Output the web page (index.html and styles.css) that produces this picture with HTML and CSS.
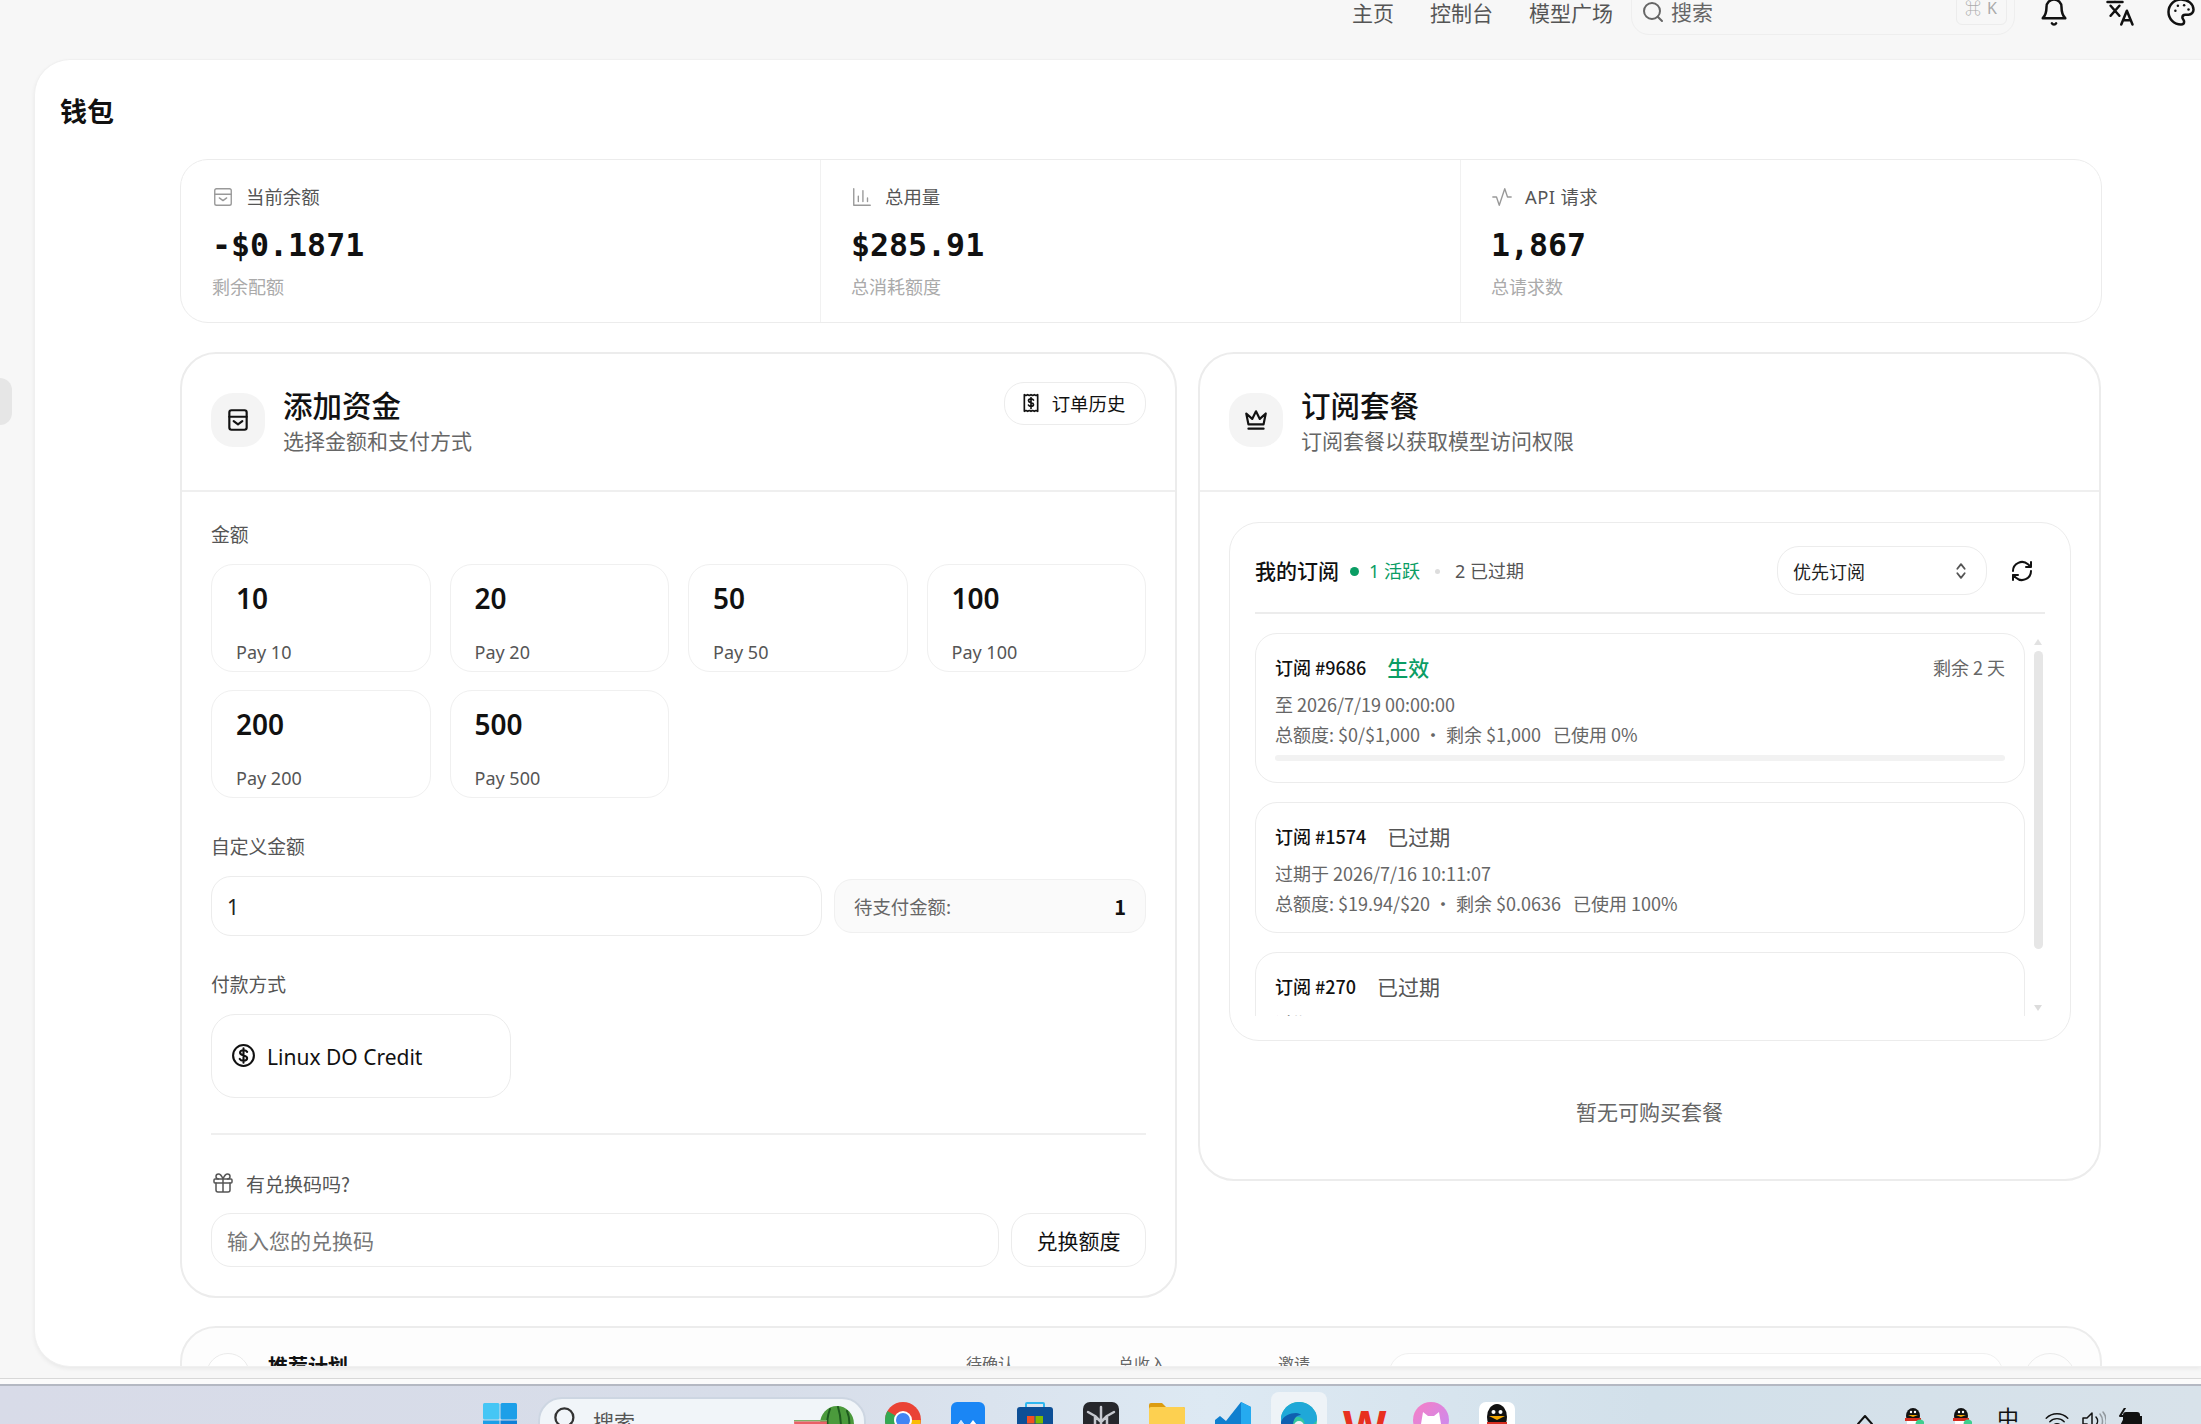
FILE: index.html
```html
<!doctype html>
<html lang="zh">
<head>
	<title>钱包</title>
	<meta charset="utf-8"/>
	<link rel="stylesheet" href="styles.css">
</head>
<body>

	<header class="topbar">
		<a class="navLink">主页</a>
		<a class="navLink">控制台</a>
		<a class="navLink">模型广场</a>
		<div class="searchBox">
			<svg class="searchIcon" viewBox="0 0 24 24"><circle cx="11" cy="11" r="8"/><path d="M21 21l-4.300-4.300"/></svg>
			<span class="searchText">搜索</span>
			<span class="kbd">⌘ K</span>
		</div>
		<svg class="topIcon bell" viewBox="0 0 24 24"><path d="M6 8a6 6 0 0 1 12 0c0 6 3 9 3 9H3s3-3 3-9"/><path d="M10.300 21a1.900 1.900 0 0 0 3.400 0"/></svg>
		<svg class="topIcon lang" viewBox="0 0 24 24"><path d="M2 4h12M8 1v.5M4.500 7l7 8M11.500 7l-7 8"/><path d="M13 22l4.500-11L22 22M14.500 18.500h6"/></svg>
		<svg class="topIcon palette" viewBox="0 0 24 24"><path d="M12 2a10 10 0 0 0 0 20c1.500 0 2.500-1 2.500-2.300 0-.7-.3-1.200-.7-1.700-.4-.5-.7-1-.7-1.600 0-1.300 1-2.200 2.300-2.200H18a4 4 0 0 0 4-4.200C22 5.500 17.500 2 12 2z"/><circle cx="7.500" cy="11" r="1" class="dot"/><circle cx="9.500" cy="7" r="1" class="dot"/><circle cx="14.500" cy="6.500" r="1" class="dot"/><circle cx="18" cy="10" r="1" class="dot"/></svg>
	</header>

	<div class="sideTab"></div>

	<main class="panel">
		<h1 class="pageTitle">钱包</h1>

		<div class="wrap">
			<section class="stats">
				<div class="stat">
					<div class="statLabel">
						<svg class="statIcon" viewBox="0 0 24 24"><rect x="3" y="3" width="18" height="18" rx="2"/><path d="M3 9h18M8 13l4 3 4-3"/></svg>
						当前余额
					</div>
					<div class="statValue">-$0.1871</div>
					<div class="statSub">剩余配额</div>
				</div>
				<div class="stat">
					<div class="statLabel">
						<svg class="statIcon" viewBox="0 0 24 24"><path d="M3 3v18h18M8 17v-6M13 17V5M18 17v-4"/></svg>
						总用量
					</div>
					<div class="statValue">$285.91</div>
					<div class="statSub">总消耗额度</div>
				</div>
				<div class="stat">
					<div class="statLabel">
						<svg class="statIcon" viewBox="0 0 24 24"><path d="M2 12h4l3 9 6-18 3 9h4"/></svg>
						<span class="apiLabel">API 请求</span>
					</div>
					<div class="statValue">1,867</div>
					<div class="statSub">总请求数</div>
				</div>
			</section>

			<div class="columns">
				<section class="card">
					<div class="cardHead">
						<div class="iconTile">
							<svg viewBox="0 0 24 24"><rect x="4" y="3" width="16" height="18" rx="2"/><path d="M4 9h16M8 13l4 3 4-3"/></svg>
						</div>
						<div class="headText">
							<h2 class="cardTitle">添加资金</h2>
							<p class="cardSub">选择金额和支付方式</p>
						</div>
						<button class="historyBtn">
							<svg viewBox="0 0 24 24"><path d="M4 2v20l2-1 2 1 2-1 2 1 2-1 2 1 2-1 2 1V2l-2 1-2-1-2 1-2-1-2 1-2-1-2 1z"/><path d="M15 8.500c-.5-1-1.500-1.500-3-1.500-1.800 0-3 .8-3 2.200 0 3 6 1.600 6 4.600 0 1.400-1.200 2.200-3 2.200-1.500 0-2.500-.5-3-1.500M12 5.500v13"/></svg>
							订单历史
						</button>
					</div>
					<div class="cardBody">
						<div class="fieldLabel">金额</div>
						<div class="amounts">
							<div class="amount"><div class="amountNum">10</div><div class="amountPay">Pay 10</div></div>
							<div class="amount"><div class="amountNum">20</div><div class="amountPay">Pay 20</div></div>
							<div class="amount"><div class="amountNum">50</div><div class="amountPay">Pay 50</div></div>
							<div class="amount"><div class="amountNum">100</div><div class="amountPay">Pay 100</div></div>
							<div class="amount"><div class="amountNum">200</div><div class="amountPay">Pay 200</div></div>
							<div class="amount"><div class="amountNum">500</div><div class="amountPay">Pay 500</div></div>
						</div>

						<div class="fieldLabel customLabel">自定义金额</div>
						<div class="customRow">
							<div class="customInput">1</div>
							<div class="dueBox"><span>待支付金额:</span><b>1</b></div>
						</div>

						<div class="fieldLabel payLabel">付款方式</div>
						<div class="payMethod">
							<svg viewBox="0 0 24 24"><circle cx="12" cy="12" r="10"/><path d="M15.500 8.500c-.6-1-1.800-1.500-3.500-1.500-1.900 0-3.300.9-3.300 2.400 0 3.200 6.800 1.800 6.800 5 0 1.600-1.500 2.600-3.500 2.600-1.700 0-3-.6-3.600-1.700M12 5v14"/></svg>
							Linux DO Credit
						</div>

						<div class="formRule"></div>

						<div class="redeemLabel">
							<svg viewBox="0 0 24 24"><rect x="3" y="8" width="18" height="4" rx="1"/><path d="M12 8v13M19 12v7a2 2 0 0 1-2 2H7a2 2 0 0 1-2-2v-7M7.500 8a2.500 2.500 0 0 1 0-5C10 3 12 8 12 8s2-5 4.500-5a2.500 2.500 0 0 1 0 5"/></svg>
							有兑换码吗?
						</div>
						<div class="redeemRow">
							<div class="redeemInput">输入您的兑换码</div>
							<button class="redeemBtn">兑换额度</button>
						</div>
					</div>
				</section>

				<section class="card subCardOuter">
					<div class="cardHead">
						<div class="iconTile">
							<svg viewBox="0 0 24 24"><path d="M5 16L3 6l5.500 5L12 4l3.500 7L21 6l-2 10z"/><path d="M5 20h14"/></svg>
						</div>
						<div class="headText">
							<h2 class="cardTitle">订阅套餐</h2>
							<p class="cardSub">订阅套餐以获取模型访问权限</p>
						</div>
					</div>
					<div class="cardBody subBody">
						<div class="myBox">
							<div class="myHead">
								<span class="myTitle">我的订阅</span>
								<span class="greenDot"></span>
								<span class="activeCount">1 活跃</span>
								<span class="greyDot"></span>
								<span class="expiredCount">2 已过期</span>
								<div class="selectBox">
									优先订阅
									<svg viewBox="0 0 24 24"><path d="M8 9.500l4-5 4 5M8 14.500l4 5 4-5"/></svg>
								</div>
								<svg class="refresh" viewBox="0 0 24 24"><path d="M3 12a9 9 0 0 1 15-6.700L21 8M21 3v5h-5M21 12a9 9 0 0 1-15 6.700L3 16M3 21v-5h5"/></svg>
							</div>
							<div class="listArea">
								<div class="subList">
									<div class="subItem first">
										<div class="subTop">
											<span class="subId">订阅 #9686</span>
											<span class="subState live">生效</span>
											<span class="subLeft">剩余 2 天</span>
										</div>
										<div class="subLine">至 2026/7/19 00:00:00</div>
										<div class="subLine">总额度: $0/$1,000<i>•</i>剩余 $1,000<u>已使用 0%</u></div>
										<div class="progress"></div>
									</div>
									<div class="subItem">
										<div class="subTop">
											<span class="subId">订阅 #1574</span>
											<span class="subState">已过期</span>
										</div>
										<div class="subLine">过期于 2026/7/16 10:11:07</div>
										<div class="subLine">总额度: $19.94/$20<i>•</i>剩余 $0.0636<u>已使用 100%</u></div>
									</div>
									<div class="subItem">
										<div class="subTop">
											<span class="subId">订阅 #270</span>
											<span class="subState">已过期</span>
										</div>
										<div class="subLine">过期于 2026/7/10 10:11:07</div>
									</div>
								</div>
								<div class="scrollTrack">
									<span class="arrowUp"></span>
									<span class="scrollThumb"></span>
									<span class="arrowDown"></span>
								</div>
							</div>
						</div>
						<p class="noPlans">暂无可购买套餐</p>
					</div>
				</section>
			</div>

			<section class="refCard">
				<div class="refTile"></div>
				<b class="refTitle">推荐计划</b>
				<span class="refStat first">待确认</span>
				<span class="refStat second">总收入</span>
				<span class="refStat third">邀请</span>
				<div class="refInput"></div>
				<div class="refBtn"></div>
			</section>
		</div>
	</main>

	<div class="windowEdge"></div>

	<footer class="taskbar">
		<svg class="winLogo" viewBox="0 0 34 34"><rect width="16.500" height="16.500" rx="1.500" fill="#45c6f5"/><rect x="17.500" width="16.500" height="16.500" rx="1.500" fill="#1c9fe8"/><rect y="17.500" width="16.500" height="16.500" fill="#1c9fe8"/><rect x="17.500" y="17.500" width="16.500" height="16.500" fill="#0f7fd8"/></svg>
		<div class="tbSearch">
			<svg class="tbLens" viewBox="0 0 24 24"><circle cx="11" cy="11" r="8"/><path d="M21 21l-4.300-4.300"/></svg>
			<span>搜索</span>
			<svg class="melon" viewBox="0 0 60 48"><ellipse cx="43" cy="18" rx="17" ry="18" fill="#4b9a3c"/><path d="M36 3c-3 8-3 12-2 20M44 1c2 6 3 12 3 22M53 5c2 5 3 10 2 16" fill="none" stroke="#1d5a1e" stroke-width="2"/><path d="M0 14h33v1.500H0z" fill="#7fb069"/><path d="M0 15.500h33L30 48H3z" fill="#ea5f66"/></svg>
		</div>
		<div class="apps">
			<svg class="app" viewBox="0 0 36 36"><circle cx="18" cy="18" r="18" fill="#ea4335"/><path d="M18 18L2.400 9A18 18 0 0 0 14 35.600z" fill="#34a853"/><path d="M18 18H35.600A18 18 0 0 1 14 35.600z" fill="#fbbc05"/><circle cx="18" cy="18" r="9" fill="#fff"/><circle cx="18" cy="18" r="7" fill="#4285f4"/></svg>
			<svg class="app" viewBox="0 0 36 36"><rect width="34" height="44" rx="6" fill="#1a86f5"/><path d="M3 28l7-10 6 8 6-8 8 10v8H3z" fill="#fff"/><path d="M10 18l6 8-5 6H3v-4z" fill="#cfe4fb"/></svg>
			<svg class="app" viewBox="0 0 36 36"><path d="M9 7V2a1 1 0 0 1 1-1h16a1 1 0 0 1 1 1v5" fill="none" stroke="#2fb7f0" stroke-width="2"/><rect y="5" width="36" height="38" rx="3" fill="#0d4f96"/><rect x="10" y="14" width="7.500" height="7.500" fill="#f25022"/><rect x="18.500" y="14" width="7.500" height="7.500" fill="#7fba00"/><rect x="10" y="22.500" width="7.500" height="7.500" fill="#00a4ef"/><rect x="18.500" y="22.500" width="7.500" height="7.500" fill="#ffb900"/></svg>
			<svg class="app" viewBox="0 0 36 36"><rect width="36" height="44" rx="7" fill="#26272c"/><path d="M5 10l7 4v22M31 10l-7 4v22M12 14l6 6 6-6M18 5v15v16" fill="none" stroke="#c6c8cf" stroke-width="2.500"/></svg>
			<svg class="app" viewBox="0 0 36 36"><path d="M0 3a2 2 0 0 1 2-2h11l4 4h17a2 2 0 0 1 2 2v30H0z" fill="#dc9c10"/><rect y="5" width="36" height="34" rx="2" fill="#fdd050"/></svg>
			<svg class="app" viewBox="0 0 36 36"><path d="M26 0l10 5v30l-10 5L11 26l-6 5-5-3V18l5-4 6 5z" fill="#0f7fcf"/><path d="M26 0l10 5v30l-10-3z" fill="#25aaf0"/></svg>
			<div class="app edgeSlot">
				<svg class="edgeIcon" viewBox="0 0 36 36"><circle cx="18" cy="18" r="18" fill="#36c6a0"/><path d="M3 8A18 18 0 0 1 33 8c3 3 3 8 3 10-4 6-10 7-13 6 2-5-2-9-6-9C10 15 4 16 0 22c-1-5 0-10 3-14z" fill="#1fa8d8"/><path d="M0 20c2-6 9-9 15-9 3 0 4 1 5 2-5 0-8 5-8 10s3 10 8 13C8 36 0 30 0 20z" fill="#0f5fb0"/><circle cx="18" cy="24" r="5" fill="#eef3f7"/></svg>
			</div>
			<div class="app wps"><span>W</span></div>
			<div class="app catApp">
				<svg class="catFace" viewBox="0 0 36 36"><path d="M10 10l5 4h6l5-4 2 12v14H8V22z" fill="#fff"/></svg>
			</div>
			<svg class="app qqApp" viewBox="0 0 36 36"><rect width="36" height="44" rx="7" fill="#fff"/><ellipse cx="18" cy="15" rx="10" ry="13" fill="#111"/><circle cx="14.500" cy="10" r="2" fill="#fff"/><circle cx="21.500" cy="10" r="2" fill="#fff"/><path d="M10 14h16l-8 4z" fill="#f5a800"/><path d="M8 20h20v6H8z" fill="#d62c1f"/><path d="M11 26h14v10H11z" fill="#fff"/></svg>
		</div>
		<div class="tray">
			<svg class="chev" viewBox="0 0 16 10"><path d="M1 9l7-8 7 8"/></svg>
			<svg class="trayQQ" viewBox="0 0 20 16"><ellipse cx="9" cy="8" rx="7" ry="8" fill="#111"/><circle cx="7" cy="4" r="1.200" fill="#fff"/><circle cx="11" cy="4" r="1.200" fill="#fff"/><path d="M4 7h10l-5 2z" fill="#f5a800"/><path d="M1 10h16v3H1z" fill="#d62c1f"/><path d="M3 13h12v3H3z" fill="#fff"/><circle cx="16" cy="16" r="4.500" fill="#3ecf8e"/></svg>
			<svg class="trayQQ second" viewBox="0 0 20 16"><ellipse cx="9" cy="8" rx="7" ry="8" fill="#111"/><circle cx="7" cy="4" r="1.200" fill="#fff"/><circle cx="11" cy="4" r="1.200" fill="#fff"/><path d="M4 7h10l-5 2z" fill="#f5a800"/><path d="M1 10h16v3H1z" fill="#d62c1f"/><path d="M3 13h12v3H3z" fill="#fff"/><circle cx="16" cy="16" r="4.500" fill="#3ecf8e"/></svg>
			<span class="trayLang">中</span>
			<svg class="trayWifi" viewBox="0 0 26 20"><path d="M1 8a17 17 0 0 1 24 0M5 12a11 11 0 0 1 16 0M9 16a5 5 0 0 1 8 0"/></svg>
			<svg class="traySound" viewBox="0 0 24 20"><path d="M1 7h4l5-5v16l-5-5H1z"/><path d="M14 6a6 6 0 0 1 0 8"/><path d="M18 3a11 11 0 0 1 0 14M21 1a14 14 0 0 1 0 18" class="faint"/></svg>
			<svg class="trayBatt" viewBox="0 0 24 20"><rect x="6" y="5" width="15" height="16" rx="2" fill="#111"/><rect x="21" y="9" width="3" height="6" fill="#111"/><path d="M7 0L2 8h6l-4 8" stroke-width="2" fill="none"/></svg>
		</div>
	</footer>

</body>
</html>
```

FILE: styles.css
```css
* {
    margin: 0;
    padding: 0;
    box-sizing: border-box;
}

html, body {
    height: 100%;
}

body {
    width: 2201px;
    height: 1424px;
    overflow: hidden;
    position: relative;
    background-color: #f7f7f7;
    color: #111;
    font-family: "Noto Sans", "Noto Sans CJK SC", sans-serif;
    display: flex;
    flex-direction: column;
}

svg {
    fill: none;
    stroke: currentColor;
    stroke-width: 2;
    stroke-linecap: round;
    stroke-linejoin: round;
    flex-shrink: 0;
}

button {
    font-family: inherit;
    background: #fff;
    color: #111;
    cursor: pointer;
}

/* top bar */
.topbar {
    height: 59px;
    flex-shrink: 0;
    display: flex;
    align-items: flex-end;
    padding-bottom: 24px;
    padding-left: 1352px;
}

.navLink {
    font-size: 21px;
    line-height: 28px;
    color: #555;
    margin-right: 36px;
    margin-bottom: 8px;
    white-space: nowrap;
}

.navLink:nth-child(3) {
    margin-right: 18px;
}

.searchBox {
    width: 384px;
    height: 52px;
    flex-shrink: 0;
    border: 1px solid #eeeeee;
    border-radius: 18px;
    display: flex;
    align-items: flex-end;
    padding: 0 7px 9px 9px;
    color: #666;
}

.searchIcon {
    width: 24px;
    height: 24px;
    margin-bottom: 1px;
}

.searchText {
    font-size: 21px;
    line-height: 28px;
    margin-left: 6px;
    margin-bottom: -1px;
}

.kbd {
    margin-left: auto;
    width: 51px;
    height: 30px;
    border: 1px solid #ececec;
    border-radius: 6px;
    font-size: 16px;
    letter-spacing: 1px;
    text-align: center;
    color: #aaa;
    line-height: 25px;
}

.topIcon {
    width: 30px;
    height: 30px;
    color: #111;
    margin-bottom: 8px;
}

.bell {
    margin-left: 24px;
}

.lang {
    margin-left: 36px;
}

.palette {
    margin-left: 31px;
}

.dot {
    fill: #111;
    stroke: none;
}

.sideTab {
    position: absolute;
    left: -20px;
    top: 378px;
    width: 32px;
    height: 47px;
    border-radius: 12px;
    background-color: #e6e6e6;
}

/* white panel */
.panel {
    height: 1308px;
    flex-shrink: 0;
    margin-left: 34px;
    background-color: #fff;
    border-radius: 36px 0 0 36px;
    border: 1px solid #f0f0f0;
    border-right: none;
    box-shadow: 0 2px 4px rgba(0, 0, 0, 0.06);
    overflow: hidden;
}

.pageTitle {
    font-size: 27px;
    font-weight: 700;
    line-height: 40px;
    margin: 32px 0 0 25px;
}

.wrap {
    width: 1922px;
    margin: 27px 0 0 145px;
}

/* stats strip */
.stats {
    height: 164px;
    display: grid;
    grid-template-columns: 639px 640px 1fr;
    border: 1px solid #ececec;
    border-radius: 28px;
}

.stat {
    padding: 23px 31px 0 30px;
    border-left: 1px solid #f1f1f1;
}

.stat:first-child {
    padding-left: 31px;
    border-left: none;
}

.statLabel {
    display: flex;
    align-items: center;
    gap: 12px;
    font-size: 18.400px;
    line-height: 28px;
    color: #555;
}

.apiLabel {
    letter-spacing: 0.4px;
}

.statIcon {
    width: 22px;
    height: 22px;
    color: #999;
    stroke-width: 1.500;
}

.statValue {
    font-family: "DejaVu Sans Mono", monospace;
    font-weight: 700;
    font-size: 31.600px;
    line-height: 40px;
    margin-top: 14px;
}

.statSub {
    font-size: 18px;
    line-height: 26px;
    color: #aaa;
    margin-top: 9px;
}

/* two columns */
.columns {
    display: grid;
    grid-template-columns: 997px 903px;
    gap: 21px;
    align-items: start;
    margin-top: 29px;
}

.card {
    border: 2px solid #ececec;
    border-radius: 36px;
    background-color: #fff;
    height: 946px;
}

.subCardOuter {
    height: 829px;
}

.cardHead {
    height: 138px;
    border-bottom: 2px solid #efefef;
    display: flex;
    align-items: flex-start;
    padding: 28px 29px 0 29px;
}

.iconTile {
    width: 54px;
    height: 54px;
    margin-top: 11px;
    border-radius: 22px;
    background-color: #f4f4f4;
    display: flex;
    align-items: center;
    justify-content: center;
}

.iconTile svg {
    width: 26px;
    height: 26px;
}

.headText {
    margin-left: 18px;
    flex: 1;
}

.cardTitle {
    font-size: 29.500px;
    font-weight: 500;
    line-height: 40px;
    margin-top: 4px;
}

.cardSub {
    font-size: 21px;
    line-height: 30px;
    color: #666;
}

.historyBtn {
    width: 142px;
    height: 43px;
    border: 1px solid #ececec;
    border-radius: 20px;
    font-size: 18.400px;
    display: flex;
    align-items: center;
    justify-content: center;
    gap: 11px;
    padding-bottom: 2px;
}

.historyBtn svg {
    width: 20px;
    height: 20px;
    margin-left: -4px;
}

.cardBody {
    padding: 29px 29px 0 29px;
}

.fieldLabel {
    font-size: 18.800px;
    line-height: 28px;
    color: #555;
}

.amounts {
    display: grid;
    grid-template-columns: repeat(4, 219.500px);
    column-gap: 19px;
    row-gap: 18px;
    margin-top: 15px;
}

.amount {
    height: 108px;
    border: 1px solid #f0f0f0;
    border-radius: 22px;
    padding: 13px 24px;
}

.amountNum {
    font-size: 28px;
    font-weight: 600;
    line-height: 40px;
}

.amountPay {
    font-size: 18px;
    line-height: 26px;
    color: #555;
    margin-top: 21px;
}

.customLabel {
    margin-top: 35px;
}

.customRow {
    display: flex;
    align-items: center;
    gap: 12px;
    margin-top: 15px;
}

.customInput {
    width: 611px;
    height: 60px;
    border: 1px solid #ececec;
    border-radius: 20px;
    font-size: 21px;
    line-height: 60px;
    padding-left: 15px;
    color: #222;
}

.dueBox {
    width: 312px;
    height: 54px;
    border: 1px solid #f0f0f0;
    border-radius: 18px;
    background-color: #fafafa;
    display: flex;
    align-items: center;
    justify-content: space-between;
    padding: 0 19px;
    font-family: "Noto Sans CJK SC", sans-serif;
    font-size: 18.400px;
    color: #666;
}

.dueBox b {
    color: #111;
    font-size: 20px;
    font-weight: 700;
}

.payLabel {
    margin-top: 35px;
}

.payMethod {
    width: 300px;
    height: 84px;
    margin-top: 15px;
    border: 1px solid #ececec;
    border-radius: 24px;
    display: flex;
    align-items: center;
    gap: 11px;
    padding: 2px 0 0 19px;
    font-size: 21px;
}

.payMethod svg {
    width: 25px;
    height: 25px;
    margin-top: -3px;
}

.formRule {
    height: 2px;
    background-color: #efefef;
    margin-top: 35px;
}

.redeemLabel {
    display: flex;
    align-items: center;
    gap: 11px;
    font-family: "Noto Sans CJK SC", sans-serif;
    font-size: 19px;
    line-height: 28px;
    color: #555;
    margin-top: 35px;
}

.redeemLabel svg {
    width: 24px;
    height: 24px;
    stroke-width: 1.500;
    margin-top: -2px;
}

.redeemRow {
    display: flex;
    gap: 12px;
    margin-top: 15px;
}

.redeemInput {
    width: 789px;
    height: 54px;
    border: 1px solid #ececec;
    border-radius: 20px;
    font-size: 21px;
    line-height: 52px;
    padding: 1px 0 0 15px;
    color: #777;
}

.redeemBtn {
    width: 135px;
    height: 54px;
    border: 1px solid #ececec;
    border-radius: 20px;
    font-size: 21px;
}

/* subscriptions */
.subBody {
    padding-top: 30px;
}

.myBox {
    width: 842px;
    height: 519px;
    border: 1px solid #ececec;
    border-radius: 30px;
    padding: 23px 25px 0 25px;
}

.myHead {
    height: 68px;
    display: flex;
    align-items: flex-start;
    border-bottom: 2px solid #ececec;
}

.myTitle {
    font-size: 21px;
    line-height: 50px;
    font-weight: 500;
}

.greenDot {
    width: 9px;
    height: 9px;
    border-radius: 50%;
    background-color: #0a9d64;
    margin: 21px 0 0 11px;
}

.activeCount {
    font-size: 18px;
    line-height: 50px;
    color: #0a9d64;
    margin-left: 10px;
}

.greyDot {
    width: 5px;
    height: 5px;
    border-radius: 50%;
    background-color: #ddd;
    margin: 23px 0 0 15px;
}

.expiredCount {
    font-size: 18px;
    line-height: 50px;
    color: #555;
    margin-left: 15px;
}

.selectBox {
    width: 210px;
    height: 49px;
    margin-left: auto;
    margin-right: 23px;
    border: 1px solid #ececec;
    border-radius: 22px;
    display: flex;
    align-items: center;
    justify-content: space-between;
    padding: 0 14px 0 15px;
    font-size: 18px;
    color: #222;
}

.selectBox svg {
    width: 22px;
    height: 22px;
    color: #555;
}

.refresh {
    width: 24px;
    height: 24px;
    margin: 13px 11px 0 0;
}

.listArea {
    display: flex;
    height: 402px;
    overflow: hidden;
    padding-top: 19px;
}

.subList {
    width: 770px;
    flex-shrink: 0;
}

.subItem {
    border: 1px solid #ececec;
    border-radius: 22px;
    padding: 15px 19px 15px 19px;
    margin-bottom: 19px;
    height: 131px;
}

.subItem.first {
    height: 150px;
}

.subTop {
    display: flex;
    align-items: center;
    height: 36px;
}

.subId {
    font-family: "Noto Sans CJK SC", sans-serif;
    font-size: 18px;
    font-weight: 500;
}

.subState {
    font-family: "Noto Sans CJK SC", sans-serif;
    font-size: 21px;
    color: #555;
    margin-left: 21px;
}

.subState.live {
    color: #0a9d64;
    font-weight: 500;
}

.subLeft {
    font-family: "Noto Sans CJK SC", sans-serif;
    margin-left: auto;
    font-size: 18px;
    color: #666;
}

.subLine {
    font-family: "Noto Sans CJK SC", sans-serif;
    font-size: 18px;
    line-height: 30px;
    color: #666;
}

.subTop + .subLine {
    margin-top: 4px;
}

.subLine i {
    font-style: normal;
    margin: 0 4px;
}

.subLine u {
    text-decoration: none;
    margin-left: 12px;
}

.progress {
    height: 6px;
    background-color: #f2f2f2;
    border-radius: 3px;
    margin-top: 6px;
}

.scrollTrack {
    width: 10px;
    margin-left: 8px;
    display: flex;
    flex-direction: column;
    align-items: center;
    padding-top: 6px;
}

.arrowUp, .arrowDown {
    width: 0;
    height: 0;
    border-left: 4px solid transparent;
    border-right: 4px solid transparent;
}

.arrowUp {
    border-bottom: 6px solid #e2e2e2;
}

.scrollThumb {
    width: 9px;
    height: 298px;
    background-color: #e6e6e6;
    border-radius: 5px;
    margin-top: 6px;
}

.arrowDown {
    border-top: 6px solid #dcdcdc;
    margin-top: 56px;
}

.noPlans {
    text-align: center;
    font-size: 21px;
    line-height: 30px;
    color: #666;
    margin-top: 56px;
}

/* the plan cut off by the window */
.refCard {
    height: 120px;
    margin-top: 28px;
    width: 1922px;
    border: 2px solid #ececec;
    border-radius: 36px;
    background-color: #fdfdfd;
    display: flex;
    align-items: flex-start;
    padding: 25px 24px 0 24px;
}

.refTile {
    width: 44px;
    height: 44px;
    border: 1px solid #eaeaea;
    border-radius: 22px;
    background-color: #fff;
}

.refTitle {
    font-size: 20px;
    line-height: 28px;
    margin: 0 0 0 18px;
}

.refStat {
    font-size: 16px;
    line-height: 22px;
    color: #666;
}

.refStat.first {
    margin-left: 618px;
}

.refStat.second {
    margin-left: 104px;
}

.refStat.third {
    margin-left: 112px;
}

.refInput {
    width: 614px;
    height: 60px;
    margin-left: 79px;
    border: 1px solid #f0f0f0;
    border-radius: 20px;
    background-color: #fff;
}

.refBtn {
    width: 52px;
    height: 52px;
    margin-left: 21px;
    border: 1px solid #ececec;
    border-radius: 26px;
}

/* browser edge and taskbar */
.windowEdge {
    height: 17px;
    flex-shrink: 0;
    border-bottom: 5px solid #fbfbfb;
    box-shadow: inset 0 -1px 0 #d8d8d8;
}

.taskbar {
    flex: 1;
    position: relative;
    border-top: 2px solid #b4b8c2;
    background: linear-gradient(90deg, #d8dbe8 0%, #d7dde9 35%, #dde9f3 55%, #d2e0ea 75%, #d8e2ea 100%);
    display: flex;
    align-items: flex-start;
    overflow: hidden;
    padding-left: 483px;
}

.winLogo {
    width: 34px;
    height: 34px;
    margin-top: 17px;
    stroke: none;
}

.tbSearch {
    width: 328px;
    height: 60px;
    margin: 11px 0 0 21px;
    border: 2px solid #cdd6e2;
    border-radius: 24px;
    background-color: #f1f5f9;
    display: flex;
    align-items: flex-start;
    padding: 6px 0 0 12px;
    position: relative;
}

.tbLens {
    width: 27px;
    height: 27px;
    color: #333;
}

.tbSearch span {
    font-size: 21px;
    line-height: 30px;
    margin: 2px 0 0 14px;
    color: #555;
}

.melon {
    position: absolute;
    right: 10px;
    top: 7px;
    width: 60px;
    height: 48px;
    stroke: none;
}

.apps {
    display: flex;
    align-items: flex-start;
    gap: 30px;
    margin-left: 19px;
    margin-top: 16px;
}

.app {
    width: 36px;
    height: 36px;
    flex-shrink: 0;
    stroke: none;
    overflow: hidden;
}

.edgeSlot {
    width: 56px;
    height: 60px;
    margin: -10px -10px 0 -10px;
    padding: 10px;
    border-radius: 8px 8px 0 0;
    background-color: #eef3f7;
}

.edgeIcon {
    width: 36px;
    height: 36px;
    stroke: none;
}

.wps {
    font-family: "Liberation Sans", sans-serif;
    font-size: 46px;
    font-weight: 700;
    line-height: 50px;
    text-align: center;
    color: #e8301f;
    overflow: visible;
}

.wps span {
    display: block;
    margin-left: -4px;
}

.catApp {
    border-radius: 18px;
    background: linear-gradient(135deg, #f77fc4, #c48cf5);
}

.catFace {
    width: 36px;
    height: 36px;
    stroke: none;
    display: block;
}

.tray {
    position: absolute;
    left: 1850px;
    top: 0;
    right: 0;
    bottom: 0;
}

.tray > * {
    position: absolute;
}

.chev {
    left: 7px;
    top: 29px;
    width: 16px;
    height: 10px;
    color: #111;
}

.trayQQ {
    left: 54px;
    top: 22px;
    width: 20px;
    height: 16px;
    stroke: none;
}

.trayQQ.second {
    left: 102px;
}

.trayLang {
    left: 147px;
    top: 14px;
    font-size: 22px;
    color: #111;
}

.trayWifi {
    left: 195px;
    top: 25px;
    width: 24px;
    height: 18px;
    color: #111;
    stroke-width: 1.500;
}

.traySound {
    left: 232px;
    top: 25px;
    width: 24px;
    height: 20px;
    color: #111;
    stroke-width: 1.500;
}

.faint {
    opacity: 0.35;
}

.trayBatt {
    left: 268px;
    top: 22px;
    width: 24px;
    height: 20px;
    color: #111;
}
```
